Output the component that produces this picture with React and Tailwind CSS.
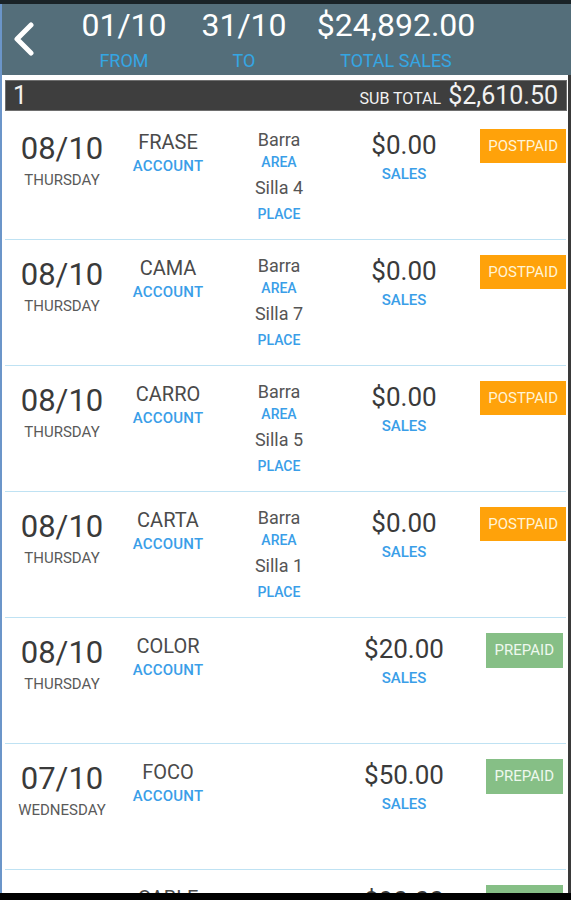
import React from "react";

const rows = [
  { date: "08/10", day: "THURSDAY", name: "FRASE", area: "Barra", place: "Silla 4", amount: "$0.00", type: "POSTPAID" },
  { date: "08/10", day: "THURSDAY", name: "CAMA", area: "Barra", place: "Silla 7", amount: "$0.00", type: "POSTPAID" },
  { date: "08/10", day: "THURSDAY", name: "CARRO", area: "Barra", place: "Silla 5", amount: "$0.00", type: "POSTPAID" },
  { date: "08/10", day: "THURSDAY", name: "CARTA", area: "Barra", place: "Silla 1", amount: "$0.00", type: "POSTPAID" },
  { date: "08/10", day: "THURSDAY", name: "COLOR", amount: "$20.00", type: "PREPAID" },
  { date: "07/10", day: "WEDNESDAY", name: "FOCO", amount: "$50.00", type: "PREPAID" },
  { date: "07/10", day: "WEDNESDAY", name: "CABLE", amount: "$90.00", type: "PREPAID" },
];

function HeaderCol({ value, label, w }) {
  return (
    <div className={`flex flex-col items-center pt-[5px] ${w}`}>
      <div className="text-[32px] leading-none text-white">{value}</div>
      <div className="mt-[11px] text-[18px] leading-none text-[#34a6e4]">{label}</div>
    </div>
  );
}

function Row({ r }) {
  return (
    <div className="flex h-[126px] shrink-0 border-b border-[#bfe2f3]">
      <div className="flex w-[114px] flex-col items-center pt-[19px]">
        <div className="text-[31px] leading-none text-[#3a3a3a]">{r.date}</div>
        <div className="mt-[9px] text-[15px] leading-none text-[#5a5a5a]">{r.day}</div>
      </div>
      <div className="flex w-[98px] flex-col items-center pt-[18px]">
        <div className="text-[20px] leading-none text-[#4a4a4a]">{r.name}</div>
        <div className="mt-[7px] text-[15px] font-medium leading-none tracking-[0.2px] text-[#3a9ee8]">ACCOUNT</div>
      </div>
      <div className="flex w-[124px] flex-col items-center pt-[17px]">
        {r.area && (
          <>
            <div className="text-[18px] leading-none text-[#555]">{r.area}</div>
            <div className="mt-[6px] text-[14px] font-medium leading-none text-[#3a9ee8]">AREA</div>
            <div className="mt-[10px] text-[18px] leading-none text-[#555]">{r.place}</div>
            <div className="mt-[10px] text-[14px] font-medium leading-none text-[#3a9ee8]">PLACE</div>
          </>
        )}
      </div>
      <div className="flex w-[126px] flex-col items-center pt-[18px]">
        <div className="text-[26px] leading-none text-[#3a3a3a]">{r.amount}</div>
        <div className="mt-[9px] text-[15px] font-medium leading-none text-[#3a9ee8]">SALES</div>
      </div>
      <div className="flex flex-1 justify-end pt-[15px]">
        {r.type === "POSTPAID" ? (
          <div className="flex h-[34px] items-center bg-[#ffa20a] px-[8px] text-[15px] leading-none text-[#fff4d6]">
            POSTPAID
          </div>
        ) : (
          <div className="mr-[3px] flex h-[35px] items-center bg-[#86bf86] px-[9px] text-[15px] leading-none text-[#eef8ee]">
            PREPAID
          </div>
        )}
      </div>
    </div>
  );
}

export default function App() {
  return (
    <div className="flex h-[900px] w-[571px] flex-col overflow-hidden bg-black font-['Roboto',_sans-serif]">
      <div className="h-[4px] shrink-0 bg-[#1a2327]" />
      <div className="flex min-h-0 flex-1 flex-col border-l-2 border-[#6b95c9] bg-white">
        <div className="flex h-[71px] shrink-0 bg-[#546e7a]">
          <svg className="ml-[10px] mt-[18px] h-[34px] w-[22px]" viewBox="0 0 22 34" fill="none">
            <polyline points="19,3 5,17 19,31" stroke="white" strokeWidth="5" strokeLinecap="round" strokeLinejoin="round" />
          </svg>
          <HeaderCol value="01/10" label="FROM" w="ml-[30px] w-[120px]" />
          <HeaderCol value="31/10" label="TO" w="w-[120px]" />
          <HeaderCol value="$24,892.00" label="TOTAL SALES" w="w-[184px]" />
        </div>
        <div className="flex min-h-0 flex-1 flex-col overflow-hidden border-r-[3px] border-[#3a3a3a] pl-[3px] pr-[1px]">
          <div className="mt-[5px] flex h-[31px] shrink-0 items-center justify-between border border-[#6e6e6e] bg-[#3e3e3e] pl-[7px] pr-[8px]">
            <div className="text-[25px] leading-none text-[#f2f2f2]">1</div>
            <div className="flex items-baseline">
              <span className="text-[16px] leading-none text-[#f2f2f2]">SUB TOTAL</span>
              <span className="ml-[7px] text-[25px] leading-none text-[#f2f2f2]">$2,610.50</span>
            </div>
          </div>
          <div className="mt-[3px] mr-[1px] flex flex-col">
            {rows.map((r, i) => (
              <Row key={i} r={r} />
            ))}
          </div>
        </div>
      </div>
      <div className="h-[7px] shrink-0 bg-black" />
    </div>
  );
}
